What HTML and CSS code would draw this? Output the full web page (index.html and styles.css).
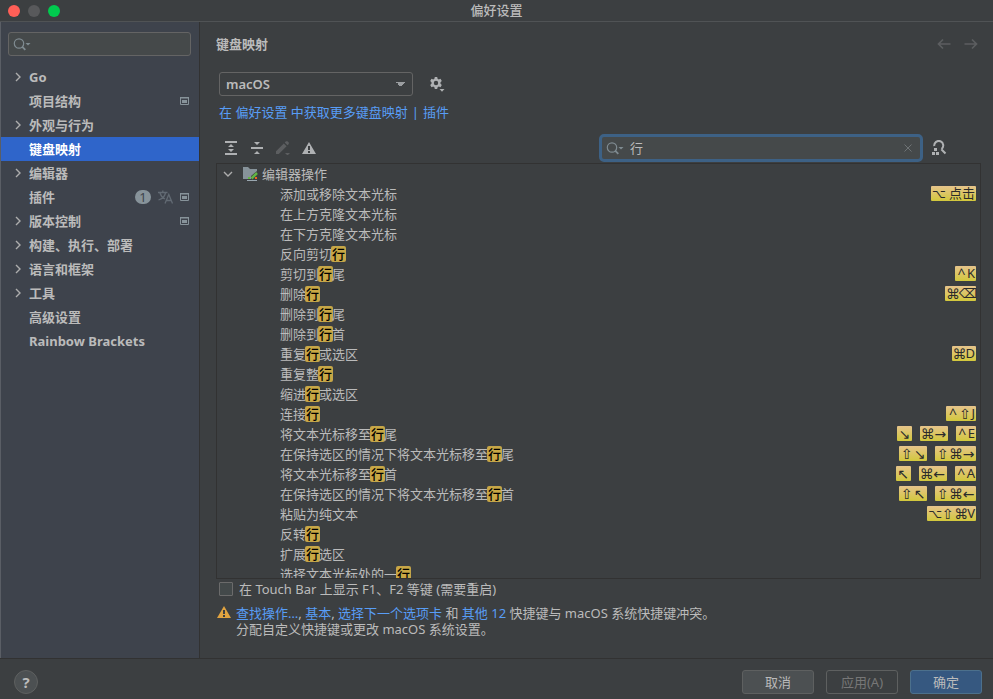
FILE: index.html
```html
<!DOCTYPE html>
<html lang="zh-CN">
<head>
    <meta charset="UTF-8">
    <meta name="viewport" content="width=device-width, initial-scale=1.0">
    <title>偏好设置</title>
    <link rel="stylesheet" href="styles.css">
</head>
<body>

    <svg class="sprite" width="0" height="0" aria-hidden="true">
        <symbol id="chevron" viewBox="0 0 10 10"><path d="M3 1l4 4-4 4" fill="none" stroke="currentColor" stroke-width="1.4"/></symbol>
        <symbol id="project" viewBox="0 0 10 10"><path d="M.5 1.500h8v7h-8z" fill="none" stroke="currentColor"/><path d="M0 1h9v1.500H0zM2 4h5v3H2z" fill="currentColor"/></symbol>
        <symbol id="search" viewBox="0 0 18 14"><circle cx="6" cy="6.5" r="4.700" fill="none" stroke="currentColor" stroke-width="1.2"/><path d="M9.300 9.800l3 3" stroke="currentColor" stroke-width="1.8"/><path d="M12.500 6h5l-2.500 2.500z" fill="currentColor"/></symbol>
    </svg>

    <div class="window">
        <header class="titlebar">
            <div class="lights">
                <button class="light red" aria-label="关闭"></button>
                <button class="light gray" aria-label="最小化" disabled></button>
                <button class="light green" aria-label="缩放"></button>
            </div>
            <div class="window-title">偏好设置</div>
        </header>

        <div class="body">
            <aside class="sidebar">
                <div class="field side-search">
                    <svg class="search-icon"><use href="#search"/></svg>
                    <input type="text" aria-label="搜索设置">
                </div>
                <nav class="menu">
                    <a class="item" href="#"><svg class="arrow"><use href="#chevron"/></svg><span class="label">Go</span></a>
                    <a class="item" href="#"><span class="arrow"></span><span class="label">项目结构</span><svg class="project"><use href="#project"/></svg></a>
                    <a class="item" href="#"><svg class="arrow"><use href="#chevron"/></svg><span class="label">外观与行为</span></a>
                    <a class="item selected" href="#"><span class="arrow"></span><span class="label">键盘映射</span></a>
                    <a class="item" href="#"><svg class="arrow"><use href="#chevron"/></svg><span class="label">编辑器</span></a>
                    <a class="item" href="#"><span class="arrow"></span><span class="label">插件</span><span class="count">1</span><svg class="lang" viewBox="0 0 15 14" fill="none" stroke="currentColor" stroke-width="1.3"><path d="M0 2.500h9.500M4.800 .5v2M2 3c.8 3 2.800 5 5 6M7.500 3C6.800 6 4 9 .5 10M7 13.500L10.800 4.500l3.700 9M8.400 10.500h4.800"/></svg><svg class="project"><use href="#project"/></svg></a>
                    <a class="item" href="#"><svg class="arrow"><use href="#chevron"/></svg><span class="label">版本控制</span><svg class="project"><use href="#project"/></svg></a>
                    <a class="item" href="#"><svg class="arrow"><use href="#chevron"/></svg><span class="label">构建、执行、部署</span></a>
                    <a class="item" href="#"><svg class="arrow"><use href="#chevron"/></svg><span class="label">语言和框架</span></a>
                    <a class="item" href="#"><svg class="arrow"><use href="#chevron"/></svg><span class="label">工具</span></a>
                    <a class="item" href="#"><span class="arrow"></span><span class="label">高级设置</span></a>
                    <a class="item" href="#"><span class="arrow"></span><span class="label">Rainbow Brackets</span></a>
                </nav>
            </aside>

            <main class="main">
                <div class="heading">
                    <h1>键盘映射</h1>
                    <button class="icon-btn nav" aria-label="后退" disabled><svg width="14" height="12" viewBox="0 0 14 12" fill="none" stroke="currentColor" stroke-width="1.7"><path d="M13.500 6H1.500M6 1.500L1.500 6 6 10.500"/></svg></button>
                    <button class="icon-btn nav" aria-label="前进" disabled><svg width="14" height="12" viewBox="0 0 14 12" fill="none" stroke="currentColor" stroke-width="1.7"><path d="M.5 6h12M8 1.500L12.500 6 8 10.500"/></svg></button>
                </div>

                <div class="scheme">
                    <select class="scheme-select" aria-label="键盘映射方案">
                        <option>macOS</option>
                    </select>
                    <button class="icon-btn" aria-label="方案操作">
                        <svg width="17" height="16" viewBox="0 0 17 16" fill="currentColor"><path fill-rule="evenodd" d="M5.800 1h2.400l.4 1.800 1.200.6 1.700-.7 1.300 2.200-1.300 1.300v1.600l1.300 1.300-1.300 2.200-1.700-.7-1.200.6-.4 1.800H5.800l-.4-1.800-1.200-.6-1.700.7-1.300-2.200 1.300-1.300V6.200L1.200 4.900l1.300-2.200 1.700.7 1.200-.6zM7 4.800a2.200 2.200 0 100 4.400 2.200 2.200 0 000-4.400z"/><path d="M10.500 13h5L13 15.800z"/></svg>
                    </button>
                </div>

                <div class="more"><a href="#">在 偏好设置 中获取更多键盘映射</a><span class="bar">|</span><a href="#">插件</a></div>

                <div class="toolbar">
                    <button class="icon-btn" aria-label="全部展开"><svg width="14" height="14" viewBox="0 0 14 14" fill="currentColor"><path d="M1 0h12v2H1zM1 12h12v2H1zM7 3l3 3H4zM7 11L4 8h6z"/></svg></button>
                    <button class="icon-btn" aria-label="全部折叠"><svg width="14" height="14" viewBox="0 0 14 14" fill="currentColor"><path d="M1 6h12v2H1zM4 1h6L7 4zM4 13h6l-3-3z"/></svg></button>
                    <button class="icon-btn" aria-label="编辑快捷键" disabled><svg width="14" height="14" viewBox="0 0 14 14" fill="currentColor"><path d="M0 13V10.200l7.800-7.800 2.800 2.800L2.800 13zM8.700 1.500L10 .2h1.500l1.300 1.300V3l-1.300 1.300zM9 12h5l-2.500 2.500z"/></svg></button>
                    <button class="icon-btn" aria-label="显示冲突"><svg width="14" height="14" viewBox="0 0 14 14" fill="currentColor"><path fill-rule="evenodd" d="M7 1l7 12H0zM6 5v4h2V5zM6 10v2h2v-2z"/></svg></button>
                    <div class="field action-search">
                        <svg class="search-icon"><use href="#search"/></svg>
                        <input type="text" value="行" aria-label="搜索操作">
                        <button class="icon-btn clear" aria-label="清除"><svg width="8" height="8" viewBox="0 0 8 8"><path d="M.5.5l7 7M7.500.5l-7 7" stroke="currentColor"/></svg></button>
                    </div>
                    <button class="icon-btn" aria-label="按快捷键查找"><svg width="16" height="16" viewBox="0 0 16 16"><path d="M3.300 6a4.500 4.500 0 117.200 3M10.300 9.200l4.200 4.300" fill="none" stroke="currentColor" stroke-width="2"/><path d="M3 8h3v3H3zM1 12h3v3H1zM5 12h3v3H5z" fill="currentColor"/></svg></button>
                </div>

                <div class="tree">
                    <div class="row group">
                        <svg class="arrow down"><use href="#chevron"/></svg>
                        <svg class="folder" width="16" height="16" viewBox="0 0 16 16"><path d="M0 1h5l2 2h7v2L8 10v3H0z" fill="#87939a"/><path d="M4 14.500h10" stroke="#9aa7b0"/><path d="M8.500 12.500L14 7" stroke="#62b543" stroke-width="2.500"/><path d="M5 11h2v2H5z" fill="#62b543"/><path d="M12 11h2v2h-2z" fill="#f26522"/></svg>
                        <span>编辑器操作</span>
                    </div>
                    <div class="row"><span class="name">添加或移除文本光标</span><kbd><i class="opt">⌥</i><span>点击</span></kbd></div>
                    <div class="row"><span class="name">在上方克隆文本光标</span></div>
                    <div class="row"><span class="name">在下方克隆文本光标</span></div>
                    <div class="row"><span class="name">反向剪切<mark>行</mark></span></div>
                    <div class="row"><span class="name">剪切到<mark>行</mark>尾</span><kbd><i class="ctrl">^</i>K</kbd></div>
                    <div class="row"><span class="name">删除<mark>行</mark></span><kbd><i>⌘</i><i class="wide">⌫</i></kbd></div>
                    <div class="row"><span class="name">删除到<mark>行</mark>尾</span></div>
                    <div class="row"><span class="name">删除到<mark>行</mark>首</span></div>
                    <div class="row"><span class="name">重复<mark>行</mark>或选区</span><kbd><i>⌘</i>D</kbd></div>
                    <div class="row"><span class="name">重复整<mark>行</mark></span></div>
                    <div class="row"><span class="name">缩进<mark>行</mark>或选区</span></div>
                    <div class="row"><span class="name">连接<mark>行</mark></span><kbd><i class="ctrl">^</i><i>⇧</i>J</kbd></div>
                    <div class="row"><span class="name">将文本光标移至<mark>行</mark>尾</span><kbd><i>↘</i></kbd><kbd><i>⌘</i><i>→</i></kbd><kbd><i class="ctrl">^</i>E</kbd></div>
                    <div class="row"><span class="name">在保持选区的情况下将文本光标移至<mark>行</mark>尾</span><kbd><i>⇧</i><i>↘</i></kbd><kbd><i>⇧</i><i>⌘</i><i>→</i></kbd></div>
                    <div class="row"><span class="name">将文本光标移至<mark>行</mark>首</span><kbd><i>↖</i></kbd><kbd><i>⌘</i><i>←</i></kbd><kbd><i class="ctrl">^</i>A</kbd></div>
                    <div class="row"><span class="name">在保持选区的情况下将文本光标移至<mark>行</mark>首</span><kbd><i>⇧</i><i>↖</i></kbd><kbd><i>⇧</i><i>⌘</i><i>←</i></kbd></div>
                    <div class="row"><span class="name">粘贴为纯文本</span><kbd><i class="opt">⌥</i><i>⇧</i><i>⌘</i>V</kbd></div>
                    <div class="row"><span class="name">反转<mark>行</mark></span></div>
                    <div class="row"><span class="name">扩展<mark>行</mark>选区</span></div>
                    <div class="row"><span class="name">选择文本光标处的一<mark>行</mark></span></div>
                </div>

                <label class="touchbar"><input type="checkbox">在 Touch Bar 上显示 F1、F2 等键 (需要重启)</label>

                <div class="warning">
                    <svg width="14" height="14" viewBox="0 0 14 14"><path d="M7 1l7 12H0z" fill="#e0a340"/><path d="M6 5h2v4H6zM6 10h2v2H6z" fill="#3c3f41"/></svg>
                    <p><a href="#">查找操作…</a>, <a href="#">基本</a>, <a href="#">选择下一个选项卡</a> 和 <a href="#">其他 12</a> 快捷键与 macOS 系统快捷键冲突。<br>分配自定义快捷键或更改 macOS 系统设置。</p>
                </div>
            </main>
        </div>

        <footer class="footer">
            <button class="help" aria-label="帮助">?</button>
            <button class="btn">取消</button>
            <button class="btn" disabled>应用(A)</button>
            <button class="btn primary">确定</button>
        </footer>
    </div>

</body>
</html>
```
FILE: styles.css
```css
* {
    box-sizing: border-box;
}
body {
    margin: 0;
    background-color: #3c3f41;
    color: #bbbbbb;
    font-family: "Noto Sans", "Noto Sans CJK SC", sans-serif;
    font-size: 13px;
    line-height: 20px;
}
button, input, select {
    font: inherit;
    color: inherit;
}
a {
    color: #589df6;
    text-decoration: none;
}
svg {
    flex: none;
}
.sprite {
    position: absolute;
}
.window {
    height: 100vh;
    display: flex;
    flex-direction: column;
}

/* title bar */
.titlebar {
    flex: none;
    display: grid;
    grid-template-columns: 1fr auto 1fr;
    align-items: center;
    height: 22px;
    padding: 0 8px;
    border-bottom: 1px solid #505355;
}
.lights {
    display: flex;
    gap: 8px;
}
.light {
    width: 12px;
    height: 12px;
    padding: 0;
    border: none;
    border-radius: 50%;
}
.light.red {
    background-color: #ff5f57;
}
.light.gray {
    background-color: #58595b;
}
.light.green {
    background-color: #00ca4e;
}
.window-title {
    font-weight: 500;
    line-height: 18px;
    padding-bottom: 2px;
}

.body {
    flex: 1;
    min-height: 0;
    display: flex;
}

/* text fields */
.field {
    display: flex;
    align-items: center;
    height: 24px;
    padding: 0 6px 0 4px;
    background-color: #45494a;
    border: 1px solid #646464;
    border-radius: 3px;
}
.field input {
    flex: 1;
    min-width: 0;
    padding: 0 0 0 6px;
    background: none;
    border: none;
    outline: none;
}
.search-icon {
    width: 18px;
    height: 14px;
    color: #7f8b91;
}

/* sidebar */
.sidebar {
    flex: none;
    width: 200px;
    padding-top: 10px;
    background-color: #3e434c;
    border-left: 1px solid #5a5e65;
    border-right: 1px solid #323232;
}
.side-search {
    margin: 0 8px 9px 7px;
}
.item {
    display: flex;
    align-items: center;
    height: 24px;
    padding: 0 9px 1px 12px;
    color: #bbbbbb;
    font-weight: bold;
}
.item.selected {
    background-color: #2f65ca;
    color: #ffffff;
}
.arrow {
    flex: none;
    width: 10px;
    height: 10px;
    color: #adadad;
}
.item .arrow {
    margin-right: 6px;
}
.arrow.down {
    transform: rotate(90deg);
}
.label {
    flex: 1;
}
.project {
    width: 10px;
    height: 10px;
    color: #87939a;
}
.count {
    width: 16px;
    height: 14px;
    border-radius: 7px;
    background-color: #87939a;
    color: #3e434c;
    font-weight: normal;
    line-height: 14px;
    text-align: center;
}
.lang {
    width: 15px;
    height: 14px;
    margin: 0 7px;
    color: #626a73;
}

/* main panel */
.main {
    flex: 1;
    min-width: 0;
    display: flex;
    flex-direction: column;
    padding: 12px 12px 21px 16px;
}
.heading {
    display: flex;
    align-items: center;
    gap: 7px;
    height: 20px;
}
.heading h1 {
    flex: 1;
    margin: 0;
    font-size: 13px;
}
.icon-btn {
    flex: none;
    display: flex;
    align-items: center;
    justify-content: center;
    width: 20px;
    height: 20px;
    padding: 0;
    border: none;
    background: none;
    color: #afb1b3;
}
.icon-btn:disabled {
    color: #5c5e60;
}
.scheme {
    display: flex;
    align-items: center;
    gap: 14px;
    margin: 18px 0 6px 3px;
}
.scheme-select {
    width: 194px;
    height: 24px;
    padding: 0 6px;
    appearance: none;
    border: 1px solid #646464;
    border-radius: 3px;
    background-color: #3c3f41;
    background-image: linear-gradient(to bottom right, #9a9da0 50%, transparent 50%), linear-gradient(to bottom left, #9a9da0 50%, transparent 50%);
    background-repeat: no-repeat;
    background-size: 5px 5px;
    background-position: right 6px center, right 11px center;
    font-weight: 600;
}
.more {
    margin-left: 3px;
    color: #589df6;
}
.bar {
    margin: 0 4px;
}
.toolbar {
    display: flex;
    align-items: center;
    gap: 6px;
    height: 28px;
    margin: 12px 0 1px;
    padding: 0 32px 0 5px;
}
.action-search {
    width: 324px;
    height: 28px;
    margin-left: auto;
    border: 3px solid #3d6185;
    border-radius: 5px;
}
.clear {
    width: 12px;
    color: #6e7375;
}

/* actions tree */
.tree {
    flex: 1;
    min-height: 0;
    overflow: hidden;
    border: 1px solid #323232;
}
.row {
    display: flex;
    align-items: center;
    gap: 8px;
    height: 20px;
    padding: 0 4px 0 63px;
}
.row.group {
    gap: 3px;
    padding-left: 6px;
}
.folder {
    margin-left: 7px;
}
.name {
    flex: 1;
}
mark {
    display: inline-block;
    height: 14px;
    border-radius: 1px;
    background-color: #c9a844;
    box-shadow: 0 0 0 1px #c4a54a;
    color: #000000;
    font-weight: 500;
    line-height: 14px;
}
kbd {
    display: flex;
    height: 15px;
    margin-bottom: 2px;
    padding: 0 1px;
    border-radius: 1px;
    background: linear-gradient(#e6c48c, #d2c83c);
    color: #2b2b2b;
    font-family: "Noto Sans", "DejaVu Sans", "Noto Sans CJK SC", sans-serif;
    line-height: 15px;
}
kbd span {
    margin-left: 4px;
}
kbd i {
    width: 13px;
    font-size: 14px;
    font-style: normal;
    text-align: center;
}
kbd .opt {
    font-size: 12px;
}
kbd .ctrl {
    width: 11px;
}
kbd .wide {
    width: 16px;
    font-size: 13px;
}

/* below the tree */
.touchbar {
    display: flex;
    align-items: center;
    gap: 6px;
    margin-left: 3px;
}
.touchbar input {
    width: 14px;
    height: 14px;
    margin: 0;
    appearance: none;
    border: 1px solid #6b6b6b;
    border-radius: 1px;
    background-color: #43494a;
}
.warning {
    display: flex;
    gap: 5px;
    margin: 6px 0 0 1px;
    line-height: 16px;
}
.warning p {
    margin: 0;
}

/* bottom buttons */
.footer {
    flex: none;
    display: flex;
    align-items: center;
    gap: 12px;
    height: 41px;
    padding: 5px 11px 0 14px;
    border-top: 1px solid #323232;
}
.help {
    width: 24px;
    height: 24px;
    margin-right: auto;
    padding: 0;
    border: 1px solid #5e6060;
    border-radius: 50%;
    background-color: #4c5052;
    font-size: 15px;
    font-weight: bold;
    line-height: 20px;
}
.btn {
    width: 72px;
    height: 24px;
    padding: 0;
    border: 1px solid #5e6060;
    border-radius: 3px;
    background-color: #4c5052;
}
.btn:disabled {
    background: none;
    color: #777777;
}
.btn.primary {
    border-color: #4c708c;
    background-color: #365880;
}
```
